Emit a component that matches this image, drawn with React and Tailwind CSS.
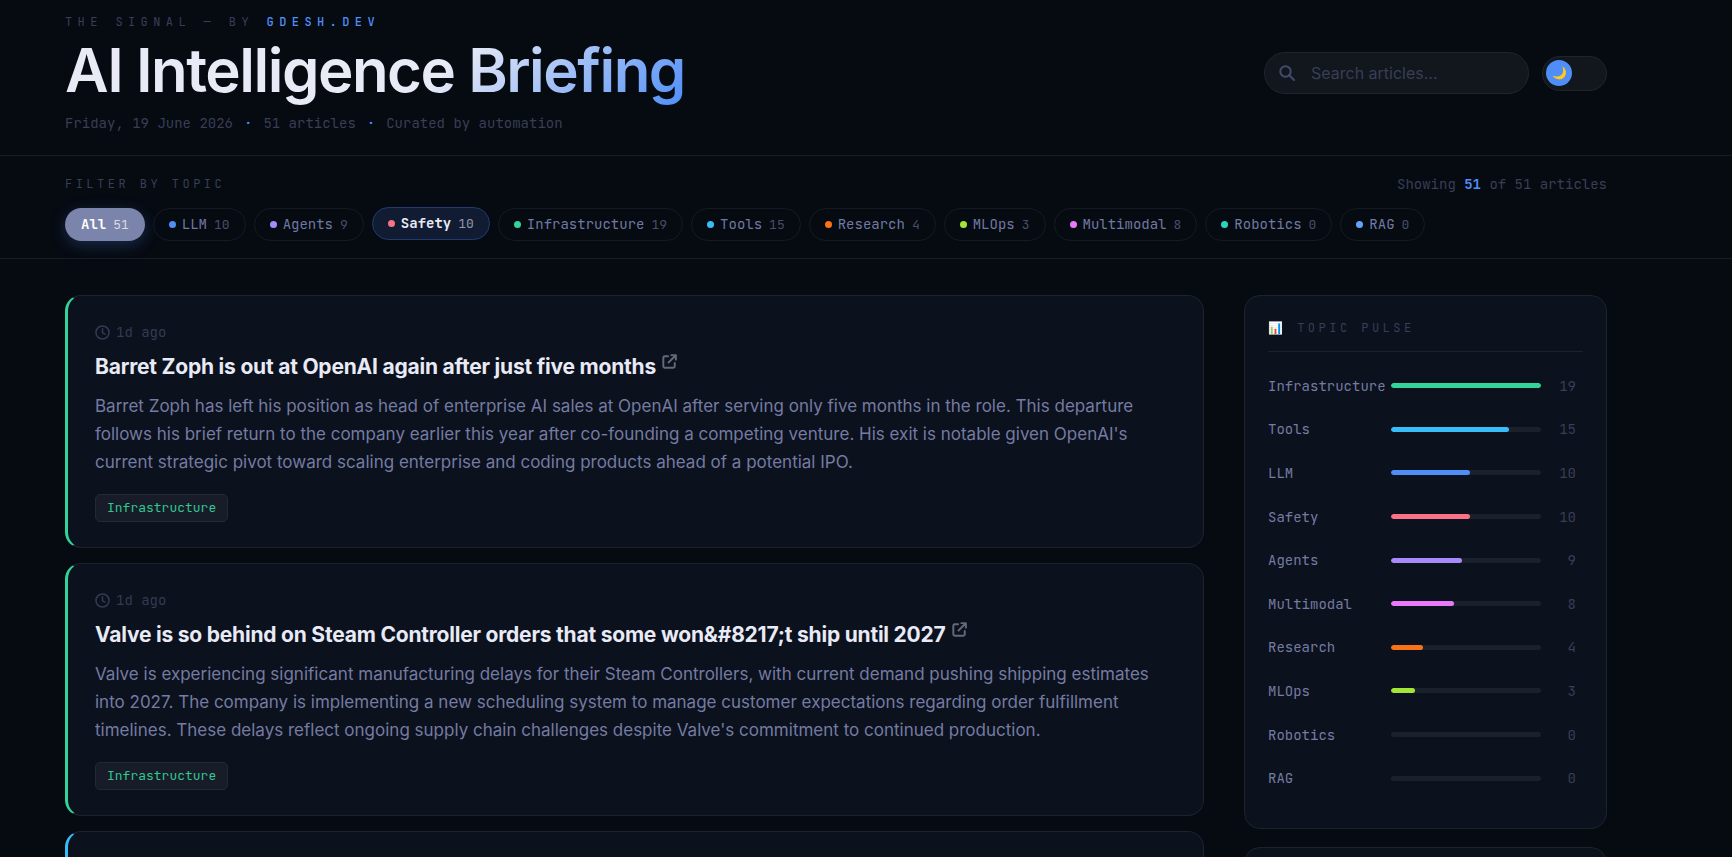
import { useState } from "react";

const MONO = "font-['JetBrains_Mono','DejaVu_Sans_Mono',monospace]";

const TOPICS = [
  { name: "LLM", count: 10, dot: "bg-[#4f8ef7]" },
  { name: "Agents", count: 9, dot: "bg-[#a78bfa]" },
  { name: "Safety", count: 10, dot: "bg-[#fb7185]" },
  { name: "Infrastructure", count: 19, dot: "bg-[#34d399]" },
  { name: "Tools", count: 15, dot: "bg-[#38bdf8]" },
  { name: "Research", count: 4, dot: "bg-[#f97316]" },
  { name: "MLOps", count: 3, dot: "bg-[#a3e635]" },
  { name: "Multimodal", count: 8, dot: "bg-[#e879f9]" },
  { name: "Robotics", count: 0, dot: "bg-[#2dd4bf]" },
  { name: "RAG", count: 0, dot: "bg-[#60a5fa]" },
];

// Array.prototype.sort is stable, so topics with equal counts keep their order.
const PULSE = [...TOPICS].sort((a, b) => b.count - a.count);
const PULSE_MAX = PULSE[0].count;

const ARTICLES = [
  {
    age: "1d ago",
    title: "Barret Zoph is out at OpenAI again after just five months",
    body: "Barret Zoph has left his position as head of enterprise AI sales at OpenAI after serving only five months in the role. This departure follows his brief return to the company earlier this year after co-founding a competing venture. His exit is notable given OpenAI's current strategic pivot toward scaling enterprise and coding products ahead of a potential IPO.",
    tag: "Infrastructure",
    edge: "border-l-[#34d399]",
  },
  {
    age: "1d ago",
    title: "Valve is so behind on Steam Controller orders that some won&#8217;t ship until 2027",
    body: "Valve is experiencing significant manufacturing delays for their Steam Controllers, with current demand pushing shipping estimates into 2027. The company is implementing a new scheduling system to manage customer expectations regarding order fulfillment timelines. These delays reflect ongoing supply chain challenges despite Valve's commitment to continued production.",
    tag: "Infrastructure",
    edge: "border-l-[#34d399]",
  },
];

function SearchIcon() {
  return (
    <svg className="size-4" viewBox="0 0 16 16" fill="none" stroke="currentColor" strokeWidth="2" strokeLinecap="round" aria-hidden="true">
      <circle cx="6.5" cy="6.5" r="5.2" />
      <path d="M10.3 10.3 15 15" />
    </svg>
  );
}

function ClockIcon() {
  return (
    <svg className="size-[15px]" viewBox="0 0 24 24" fill="none" stroke="currentColor" strokeWidth="2.4" strokeLinecap="round" strokeLinejoin="round" aria-hidden="true">
      <circle cx="12" cy="12" r="10.5" />
      <path d="M12 6v6.500l4 2" />
    </svg>
  );
}

function ExternalIcon() {
  return (
    <svg className="ml-[6px] inline-block size-[15px] align-[5px] text-[#656876]" viewBox="0 0 16 16" fill="none" stroke="currentColor" strokeWidth="2.1" strokeLinecap="round" strokeLinejoin="round" aria-hidden="true">
      <path d="M6.500 2.500H3A1.600 1.600 0 0 0 1.400 4v9A1.600 1.600 0 0 0 3 14.600h9a1.600 1.600 0 0 0 1.600-1.600V9.500" />
      <path d="M10 1.200h4.800V6M14.600 1.400 7 9" />
    </svg>
  );
}

function Header() {
  const [dark, setDark] = useState(true);
  return (
    <header className="border-b border-[#191d25]">
      <div className="flex items-center justify-between pt-[13px] pr-[125px] pb-[22px] pl-[65px]">
        <div>
          <p className={`${MONO} mb-1 text-xs leading-[18px] tracking-[0.45em] text-[#393e57] uppercase`}>
            The Signal — by <a href="#site" className="font-medium text-[#4f8ef7]">gdesh.dev</a>
          </p>
          <h1 className="w-fit bg-[linear-gradient(135deg,#e8eaf6_60%,#4f8ef7_100%)] bg-clip-text text-[60px] leading-[70px] font-semibold tracking-tight text-transparent">
            AI Intelligence Briefing
          </h1>
          <p className={`${MONO} mt-2 flex gap-[11px] text-sm leading-5 text-[#393e57]`}>
            <span>Friday, 19 June 2026</span>
            <span className="text-[#4f8ef7]">·</span>
            <span>51 articles</span>
            <span className="text-[#4f8ef7]">·</span>
            <span>Curated by automation</span>
          </p>
        </div>
        <div className="flex items-center gap-[13px]">
          <label className="flex h-[42px] w-[265px] items-center gap-4 rounded-full border border-[#20242c] bg-[#12161d] px-[14px] text-[#444a6b]">
            <SearchIcon />
            <input type="search" aria-label="Search articles" placeholder="Search articles..." className="min-w-0 flex-1 bg-transparent text-base text-[#e8eaf6] outline-none placeholder:text-[#393e57]" />
          </label>
          <button type="button" role="switch" aria-checked={dark} aria-label="Dark mode" onClick={() => setDark(!dark)} className="flex h-[35px] w-[65px] items-center rounded-full border border-[#20242c] bg-[#12161d] px-[3px]">
            <span className="flex size-[26px] items-center justify-center rounded-full bg-[#4f8ef7] text-[12px] leading-none">🌙</span>
          </button>
        </div>
      </div>
    </header>
  );
}

function Pill({ name, count, dot, state }) {
  const look = {
    active: "border-transparent bg-[#7b84aa] text-white font-bold shadow-[0_4px_16px_rgba(79,142,247,0.25)]",
    hover: "-translate-y-px border-[#203c70] bg-[#111c33] text-[#e8eaf6] font-bold",
    idle: "border-[#161a22] text-[#7079a3]",
  }[state];
  const countLook = {
    active: "text-[#d8dbe6]",
    hover: "text-[#9497a6]",
    idle: "text-[#484e69]",
  }[state];
  return (
    <button type="button" aria-pressed={state === "active"} className={`${look} ${MONO} flex h-[33px] items-center gap-[6px] rounded-full border px-[15px] text-sm`}>
      {dot && <span className={`${dot} size-[7px] rounded-full`} />}
      <span className="flex items-baseline gap-[7px]">
        {name}
        <span className={`${countLook} text-[13px] font-normal`}>{count}</span>
      </span>
    </button>
  );
}

function Filters() {
  return (
    <section className="border-b border-[#191d25] pt-[18px] pr-[125px] pb-[17px] pl-[65px]">
      <div className={`${MONO} mb-[14px] flex items-center justify-between leading-5 text-[#393e57]`}>
        <h2 className="text-xs leading-5 tracking-[0.29em] uppercase">Filter by topic</h2>
        <p className="text-sm leading-5">
          Showing <strong className="text-[#4f8ef7]">51</strong> of 51 articles
        </p>
      </div>
      <div className="flex flex-wrap gap-2">
        <Pill name="All" count={51} state="active" />
        {TOPICS.map((t) => (
          <Pill key={t.name} {...t} state={t.name === "Safety" ? "hover" : "idle"} />
        ))}
      </div>
    </section>
  );
}

function Article({ age, title, body, tag, edge }) {
  return (
    <article className={`${edge} rounded-2xl border border-l-[3px] border-y-[#1d222d] border-r-[#1d222d] bg-[#0b111d] px-[27px] pt-[26px] pb-[25px]`}>
      <p className={`${MONO} mb-[10px] flex items-center gap-[6px] text-sm leading-5 text-[#353a52]`}>
        <ClockIcon />
        {age}
      </p>
      <h3 className="mb-[10px] text-[21px] leading-[30px] font-bold tracking-[-0.01em] text-[#e8eaf6]">
        <a href="#article">
          {title}
          <ExternalIcon />
        </a>
      </h3>
      <p className="mb-[18px] text-[17px] leading-7 text-[#757ba2]">{body}</p>
      <span className={`${MONO} flex h-7 w-fit items-center rounded-[5px] border border-[#242934] bg-[#171c28] px-[11px] text-[13px] text-[#31c791]`}>
        {tag}
      </span>
    </article>
  );
}

function TopicPulse() {
  return (
    <section className="rounded-2xl border border-[#1d222d] bg-[#0b111d] px-[23px] pt-[23px] pb-7">
      <h2 className={`${MONO} mb-3 border-b border-[#1d222d] pb-[14px] text-xs leading-[18px] tracking-[0.29em] text-[#393e57] uppercase`}>
        📊 Topic pulse
      </h2>
      <ul className={`${MONO} grid h-[436px] auto-rows-fr text-sm`}>
        {PULSE.map((t) => (
          <li key={t.name} className="grid grid-cols-[115px_minmax(0,1fr)_27px] items-center gap-2 pr-[7px]">
            <span className="text-[#757ba2]">{t.name}</span>
            <span className="h-[5px] overflow-hidden rounded-full bg-[#1b212c]">
              <span className={`${t.dot} block h-full rounded-full`} style={{ width: `${(t.count / PULSE_MAX) * 100}%` }} />
            </span>
            <span className="text-right text-[#393e57]">{t.count}</span>
          </li>
        ))}
      </ul>
    </section>
  );
}

export default function App() {
  return (
    <div className="h-screen overflow-hidden bg-[#060a11] font-['Inter',sans-serif] antialiased">
      <Header />
      <Filters />
      <main className="grid grid-cols-[minmax(0,1fr)_363px] items-start gap-10 pt-9 pr-[125px] pl-[65px]">
        <div className="flex flex-col gap-[15px]">
          {ARTICLES.map((a) => (
            <Article key={a.title} {...a} />
          ))}
          <article className="h-[252px] rounded-2xl border border-l-[3px] border-y-[#1d222d] border-r-[#1d222d] border-l-[#38bdf8] bg-[#0b111d]" />
        </div>
        <aside className="flex flex-col gap-[18px]">
          <TopicPulse />
          <section className="h-60 rounded-2xl border border-[#1d222d] bg-[#0b111d]" />
        </aside>
      </main>
    </div>
  );
}
